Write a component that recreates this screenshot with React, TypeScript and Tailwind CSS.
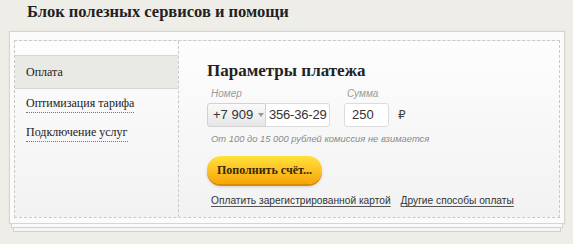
import React from 'react';

const serif = "font-['Liberation_Serif',serif]";
const sans = "font-['Liberation_Sans',Arial,sans-serif]";

export default function App() {
  return (
    <div className={`w-[573px] h-[244px] overflow-hidden bg-[#eeede8] ${sans}`}>
      <h1 className={`${serif} pl-[27px] pt-[2px] h-[31px] text-[16.5px] font-bold leading-[20px] text-[#222]`}>
        Блок полезных сервисов и помощи
      </h1>

      <div className="ml-[9px] w-[556px]">
        <div className="border border-[#d6d5cf] bg-[#fbfbfb] pt-[8px] pb-[5px] px-[4px] shadow-[0_0_2px_rgba(0,0,0,0.06)]">
          <div className="flex h-[178px] border border-dashed border-[#c9c9c9] bg-gradient-to-b from-[#fdfdfd] to-[#f2f2f2]">
            {/* left menu */}
            <div className="w-[164px] shrink-0 border-r border-dashed border-[#c9c9c9] pt-[14px]">
              <div className={`${serif} flex items-center h-[34px] pl-[11px] bg-[#e9e9e6] border-y border-[#d7d7d2] text-[12px] text-[#222]`}>
                Оплата
              </div>
              <div className={`${serif} pl-[11px] pt-[5px] flex flex-col gap-[10px] text-[12px] text-[#222]`}>
                <span className="self-start leading-[18px] border-b border-dotted border-[#777]">Оптимизация тарифа</span>
                <span className="self-start leading-[18px] border-b border-dotted border-[#777]">Подключение услуг</span>
              </div>
            </div>

            {/* right panel */}
            <div className="flex-1 pl-[28px] pt-[19px]">
              <div className={`${serif} text-[17px] font-bold leading-[22px] text-[#222]`}>Параметры платежа</div>

              <div className="flex items-end mt-[5px]">
                <div className="flex flex-col">
                  <span className="pl-[4px] text-[10px] italic text-[#9a9a9a] leading-[14px]">Номер</span>
                  <div className="flex mt-[2px] h-[24px]">
                    <div className="flex items-center gap-[5px] w-[59px] pl-[5px] rounded-l-[3px] border border-[#d2d2d2] bg-gradient-to-b from-[#fafafa] to-[#e6e6e6] text-[13px] text-[#333]">
                      +7 909
                      <svg width="6" height="4" viewBox="0 0 6 4"><path d="M0 0h6L3 4z" fill="#999" /></svg>
                    </div>
                    <div className="flex items-center w-[64px] pl-[3px] rounded-r-[3px] border border-l-0 border-[#dcdcdc] bg-white text-[13px] tracking-[-0.2px] text-[#333]">
                      356-36-29
                    </div>
                  </div>
                </div>
                <div className="flex flex-col ml-[14px]">
                  <span className="pl-[3px] text-[10px] italic text-[#9a9a9a] leading-[14px]">Сумма</span>
                  <div className="flex items-center mt-[2px] h-[24px]">
                    <div className="flex items-center w-[45px] h-full pl-[7px] rounded-[3px] border border-[#dcdcdc] bg-white text-[13px] text-[#333]">
                      250
                    </div>
                    <span className="ml-[9px] font-['DejaVu_Sans',sans-serif] text-[12px] text-[#444]">₽</span>
                  </div>
                </div>
              </div>

              <div className="mt-[5px] pl-[4px] text-[9.4px] italic text-[#8a8a8a] leading-[14px]">
                От 100 до 15 000 рублей комиссия не взимается
              </div>

              <button className={`${serif} mt-[10px] w-[115px] h-[28px] rounded-[14px] bg-gradient-to-b from-[#ffe23a] to-[#f6a400] shadow-[0_2px_0_#d98c00,0_3px_3px_rgba(0,0,0,0.15)] text-[12px] font-bold text-[#3a2600]`}>
                Пополнить счёт...
              </button>

              <div className="flex gap-[10px] mt-[10px] pl-[4px] text-[10.2px] text-[#333] leading-[14px]">
                <span className="underline underline-offset-2 decoration-[#555]">Оплатить зарегистрированной картой</span>
                <span className="underline underline-offset-2 decoration-[#555]">Другие способы оплаты</span>
              </div>
            </div>
          </div>
        </div>
        {/* stacked sheets below */}
        <div className="mx-[2px] h-[4px] border-x border-b border-[#d3d3ce] bg-[#fafafa]" />
        <div className="mx-[4px] h-[4px] border-x border-b border-[#d3d3ce] bg-[#f6f6f6]" />
      </div>
    </div>
  );
}
